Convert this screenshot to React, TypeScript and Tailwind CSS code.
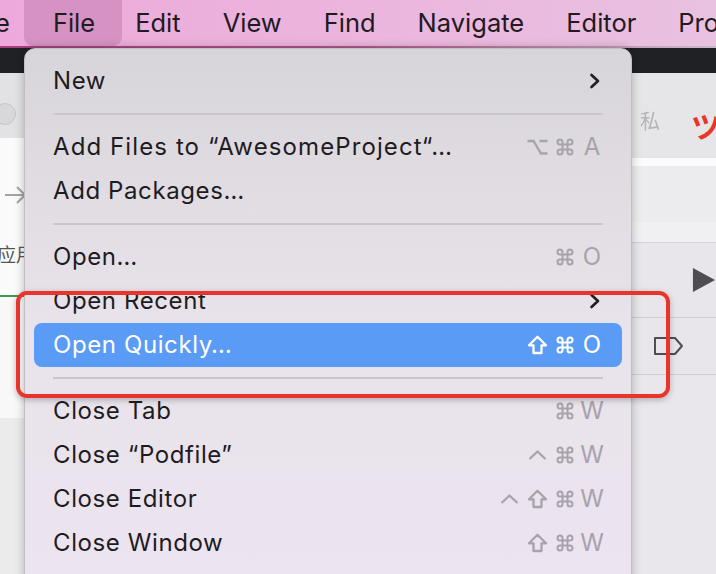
import React from "react";

type Key = "cmd" | "opt" | "shift" | "ctrl" | string;

type Item =
  | { type: "sep" }
  | { type: "item"; label: string; keys?: Key[]; submenu?: boolean; active?: boolean; wide?: boolean };

const items: Item[] = [
  { type: "item", label: "New", submenu: true },
  { type: "sep" },
  { type: "item", label: "Add Files to \u201cAwesomeProject\u201c\u2026", keys: ["opt", "cmd", "A"], wide: true },
  { type: "item", label: "Add Packages\u2026" },
  { type: "sep" },
  { type: "item", label: "Open\u2026", keys: ["cmd", "O"] },
  { type: "item", label: "Open Recent", submenu: true },
  { type: "item", label: "Open Quickly\u2026", keys: ["shift", "cmd", "O"], active: true },
  { type: "sep" },
  { type: "item", label: "Close Tab", keys: ["cmd", "W"] },
  { type: "item", label: "Close \u201cPodfile\u201d", keys: ["ctrl", "cmd", "W"] },
  { type: "item", label: "Close Editor", keys: ["ctrl", "shift", "cmd", "W"] },
  { type: "item", label: "Close Window", keys: ["shift", "cmd", "W"] },
];

const menuBar = ["File", "Edit", "View", "Find", "Navigate", "Editor", "Pro"];

const Chevron = ({ white }: { white?: boolean }) => (
  <svg width="12" height="16" viewBox="0 0 12 16" fill="none">
    <path
      d="M2.5 2 L9 8 L2.5 14"
      stroke={white ? "#fff" : "#1f1f1f"}
      strokeWidth={2.6}
      strokeLinecap="round"
      strokeLinejoin="round"
    />
  </svg>
);

const KeyGlyph = ({ k, color }: { k: Key; color: string }) => {
  if (k === "cmd")
    return (
      <svg width="20" height="20" viewBox="0 0 24 24" fill="none" stroke={color} strokeWidth={2.4}>
        <path d="M15 6v12a3 3 0 1 0 3-3H6a3 3 0 1 0 3 3V6a3 3 0 1 0-3 3h12a3 3 0 1 0-3-3" />
      </svg>
    );
  if (k === "shift")
    return (
      <svg width="21" height="20" viewBox="0 0 21 20" fill="none" stroke={color} strokeWidth={2.3} strokeLinejoin="round">
        <path d="M10.5 1.8 L19 10.3 H14.5 V18 H6.5 V10.3 H2 Z" />
      </svg>
    );
  if (k === "ctrl")
    return (
      <svg width="19" height="10" viewBox="0 0 19 10" fill="none" stroke={color} strokeWidth={2.3} strokeLinejoin="round">
        <path d="M1.5 9 L9.5 1.5 L17.5 9" />
      </svg>
    );
  if (k === "opt")
    return (
      <svg width="21" height="16" viewBox="0 0 21 16" fill="none" stroke={color} strokeWidth={2.3}>
        <path d="M0.5 2 H6.5 L14 14.5 H20.5 M12.5 2 H20.5" />
      </svg>
    );
  return <span className="text-[24px] leading-none tracking-[0.5px]">{k}</span>;
};

const Shortcut = ({ keys, active }: { keys: Key[]; active?: boolean }) => {
  const color = active ? "#ffffff" : "#a7a2ab";
  return (
    <div className={`flex items-center ${active ? "text-white" : "text-[#a7a2ab]"}`}>
      {keys.map((k, i) => (
        <span key={i} className="w-[27.5px] flex justify-center items-center">
          <KeyGlyph k={k} color={color} />
        </span>
      ))}
    </div>
  );
};

export default function App() {
  return (
    <div className="relative w-[716px] h-[574px] overflow-hidden bg-[#ececee] font-['Inter',sans-serif]">
      {/* Menu bar */}
      <div className="h-[46px] bg-gradient-to-r from-[#eda9da] to-[#e9c1e1] flex items-center text-[25.5px] text-[#1f1b1f] whitespace-nowrap">
        <span className="-ml-[5px] pr-[14px]">e</span>
        {menuBar.map((m) => (
          <span
            key={m}
            className={
              m === "File"
                ? "h-full flex items-center pl-[29px] pr-[27px] -mr-[8px] bg-[#d592c3] rounded-b-[9px]"
                : "h-full flex items-center px-[21px]"
            }
          >
            {m}
          </span>
        ))}
      </div>
      <div className="h-[2px] bg-gradient-to-r from-[#a53f7e] via-[#b05a8c] to-[#c8b8c6]" />
      {/* Dark band */}
      <div className="h-[25px] bg-[#1f2124]" />

      {/* Window content behind menu */}
      <div className="flex h-[501px]">
        {/* left strip */}
        <div className="w-[24px] flex flex-col overflow-hidden">
          <div className="h-[65px] bg-[#e2e2e4] relative">
            <div className="absolute -left-[6px] top-[30px] w-[22px] h-[22px] rounded-full bg-[#d8d8da] border border-[#c6c6c8]" />
          </div>
          <div className="h-[157px] bg-[#fafafa] flex flex-col text-[#a3a3a3]">
            <svg className="mt-[48px] ml-[4px]" width="22" height="18" viewBox="0 0 22 18" fill="none" stroke="#a3a3a3" strokeWidth={2}>
              <path d="M1 9 H21 M13 1 L21 9 L13 17" />
            </svg>
            <span className="mt-[40px] -ml-[3px] text-[19px] leading-none whitespace-nowrap text-[#555] font-['Noto_Sans_CJK_SC',sans-serif]">
              应用
            </span>
          </div>
          <div className="h-[2px] bg-[#3b9a5b]" />
          <div className="h-[121px] bg-[#f8f8f8]" />
          <div className="flex-1 bg-[#ebebeb]" />
        </div>

        <div className="flex-1 bg-[#ececee]" />

        {/* right strip */}
        <div className="w-[84px] flex flex-col overflow-hidden">
          <div className="h-[85px] bg-[#e6e6e8] flex items-start">
            <span className="ml-[8px] mt-[38px] text-[20px] leading-none text-[#b4b4b6] blur-[0.6px] font-['Noto_Sans_CJK_SC',sans-serif]">
              私
            </span>
            <div className="ml-[15px] mt-[32px] w-[2px] h-[40px] bg-[#8c8c8e]" />
            <span className="ml-[16px] mt-[37px] text-[30px] leading-none font-bold text-[#e8362c] whitespace-nowrap font-['Noto_Sans_CJK_JP',sans-serif]">
              ツ
            </span>
          </div>
          <div className="h-[8px] bg-[#fbfbfb]" />
          <div className="h-[56px] bg-[#ececee]" />
          <div className="h-[21px] bg-[#f0f0f2] border-b border-[#d4d4d6]" />
          <div className="h-[75px] bg-[#e8e6ea] border-b border-[#cfcfd2] flex items-center">
            <svg className="ml-[60px]" width="26" height="28" viewBox="0 0 26 28">
              <path d="M1 1 L25 14 L1 27 Z" fill="#4f4d52" />
            </svg>
          </div>
          <div className="h-[57px] bg-[#e8e6ea] border-b border-[#cfcfd2] flex items-center">
            <svg className="ml-[21px]" width="32" height="20" viewBox="0 0 32 20" fill="none">
              <path d="M2 2 H22 L29 10 L22 18 H2 Z" stroke="#4f4d52" strokeWidth={2} strokeLinejoin="round" />
            </svg>
          </div>
          <div className="flex-1 bg-[#e9e7eb]" />
        </div>
      </div>

      {/* Dropdown menu */}
      <div className="absolute left-[24px] top-[48px] w-[608px] h-[540px] rounded-t-[11px] bg-gradient-to-b from-[#d8d5da] via-[#e8e3ea] to-[#ece4f0] shadow-[0_0_10px_rgba(0,0,0,0.25)] border border-[#c2bec5] pt-[10px] px-[9px]">
        {items.map((it, i) =>
          it.type === "sep" ? (
            <div key={i} className="h-[22px] flex items-center px-[19px]">
              <div className="h-[2px] w-full bg-[#cbc6cd]" />
            </div>
          ) : (
            <div
              key={i}
              className={`h-[44px] flex items-center justify-between pl-[19px] rounded-[8px] ${
                it.active ? "bg-[#5a9bf6] text-white" : "text-[#1e1c1f]"
              } ${it.submenu ? "pr-[21px]" : "pr-[16px]"}`}
            >
              <span
                className={`text-[24px] leading-none whitespace-nowrap ${
                  it.wide ? "tracking-[1.1px]" : "tracking-[0.6px]"
                }`}
              >
                {it.label}
              </span>
              {it.submenu && <Chevron white={it.active} />}
              {it.keys && <Shortcut keys={it.keys} active={it.active} />}
            </div>
          )
        )}
      </div>

      {/* Red annotation box */}
      <div className="absolute left-[16px] top-[291px] w-[654px] h-[107px] border-[4px] border-[#e8342a] rounded-[11px] shadow-[0_2px_6px_rgba(0,0,0,0.25)]" />
    </div>
  );
}
